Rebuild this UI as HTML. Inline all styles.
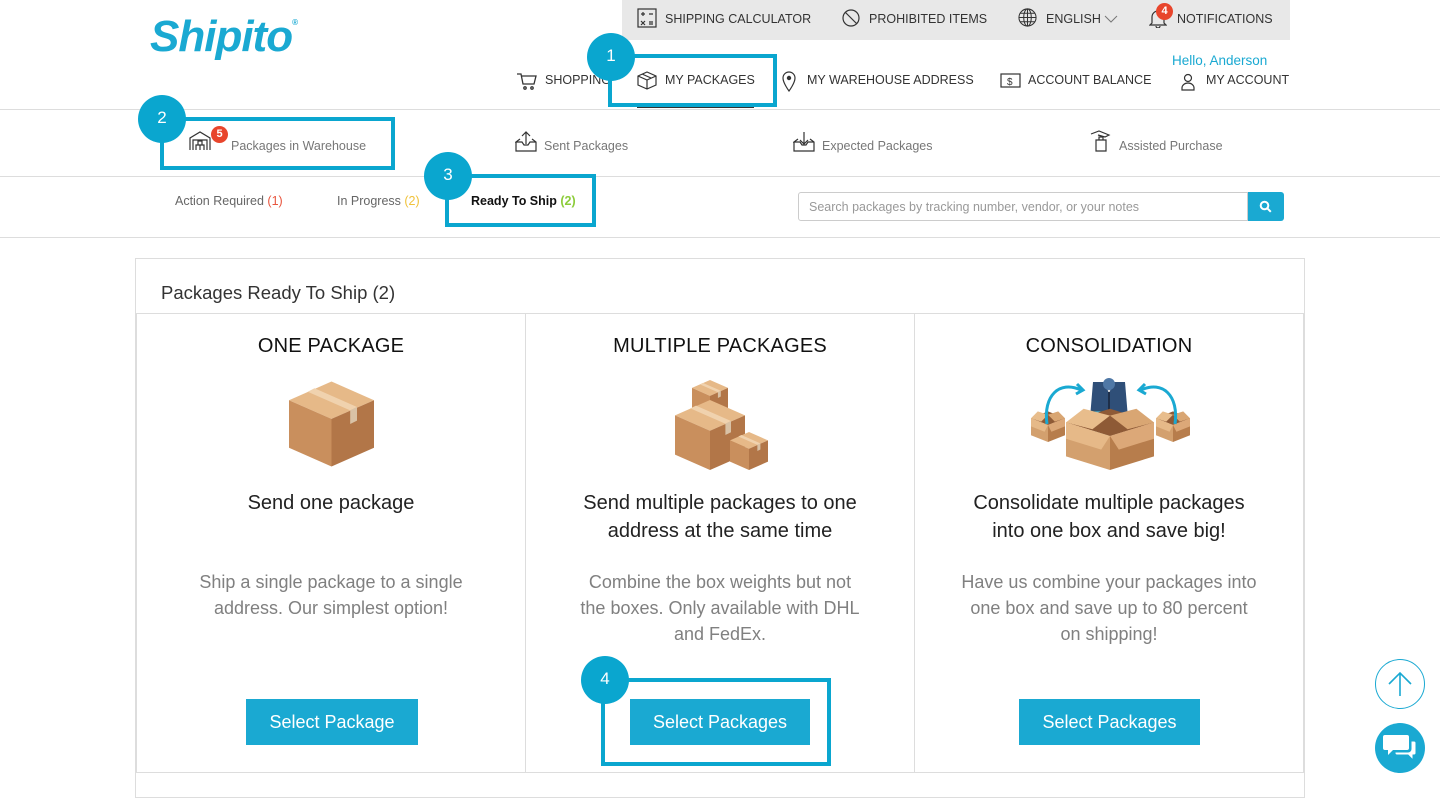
<!DOCTYPE html>
<html><head><meta charset="utf-8"><style>
*{box-sizing:border-box;margin:0;padding:0}
body{width:1440px;height:789px;overflow:hidden;background:#fff;font-family:"Liberation Sans",sans-serif;color:#222;position:relative}
.a{position:absolute}
.top{left:622px;top:0;width:668px;height:40px;background:#e8e8e8}
.tl{font-size:12.5px;color:#333;top:12px;white-space:nowrap}
.nav{font-size:12.5px;color:#333;top:73px;white-space:nowrap}
.hr{left:0;width:1440px;height:1px;background:#ddd}
.tab{font-size:12.5px;color:#777;top:139px;white-space:nowrap}
.sub{font-size:12.5px;color:#666;top:194px;white-space:nowrap}
.circ{width:48px;height:48px;border-radius:50%;background:#0aa6cf;color:#fff;font-size:17px;text-align:center;line-height:46px;z-index:5}
.hl{border:4px solid #0aa6cf;z-index:4}
.col{top:313px;width:390px;height:460px;border:1px solid #ddd;text-align:center}
.col h3{font-weight:normal;font-size:20px;margin-top:21px;color:#111;letter-spacing:.2px}
.t1{position:absolute;top:175px;left:0;width:100%;font-size:20px;line-height:28px;color:#222}
.t2{position:absolute;top:255px;left:0;width:100%;font-size:18px;line-height:26px;color:#808080}
.btn{position:absolute;top:385px;background:#1aa9d2;color:#fff;font-size:18px;height:46px;line-height:46px;text-align:center;white-space:nowrap}
.badge{width:17px;height:17px;border-radius:50%;background:#e8452c;color:#fff;font-size:11px;font-weight:bold;text-align:center;line-height:17px}
</style></head><body>
<svg width="0" height="0" style="position:absolute"><defs>
<symbol id="box" viewBox="0 0 100 100">
<polygon points="50,0 100,22 50,44 0,22" fill="#e6b988"/>
<polygon points="0,22 50,44 50,100 0,78" fill="#c98f5d"/>
<polygon points="100,22 50,44 50,100 100,78" fill="#b27648"/>
<polygon points="22,12 72,34 80,30 30,8" fill="#f0d2ae"/>
<polygon points="72,34 80,30 80,46 72,50" fill="#d9c2a6"/>
</symbol>
<symbol id="obox" viewBox="0 0 100 100">
<polygon points="50,10 100,30 50,50 0,30" fill="#8e5a36"/>
<polygon points="0,30 50,50 50,100 0,80" fill="#d3a06e"/>
<polygon points="100,30 50,50 50,100 100,80" fill="#b77d4c"/>
<polygon points="0,30 -10,50 40,70 50,50" fill="#e6b988"/>
<polygon points="100,30 110,50 60,70 50,50" fill="#dca878"/>
<polygon points="0,30 20,10 50,20 30,40" fill="#e8bd8c"/>
<polygon points="100,30 80,10 50,20 70,40" fill="#d9a673"/>
</symbol>
</defs></svg>

<div class="a" style="left:150px;top:12px;font-size:44px;font-weight:bold;font-style:italic;color:#1aa9d2;letter-spacing:-1px">Shipito<span style="font-size:8px;vertical-align:top;font-style:normal;position:relative;top:6px">®</span></div>

<div class="a top"></div>
<svg class="a" style="left:637px;top:8px" width="20" height="20" viewBox="0 0 20 20" fill="none" stroke="#333" stroke-width="1.2"><rect x="1" y="1" width="18" height="18"/><path d="M4 6h4M6 4v4M12 6h4M4 13l4 4M8 13l-4 4M12 14h4M12 16h4"/></svg>
<div class="a tl" style="left:665px">SHIPPING CALCULATOR</div>
<svg class="a" style="left:842px;top:9px" width="18" height="18" viewBox="0 0 18 18" fill="none" stroke="#333" stroke-width="1.2"><circle cx="9" cy="9" r="8"/><path d="M3.5 3.5l11 11"/></svg>
<div class="a tl" style="left:869px">PROHIBITED ITEMS</div>
<svg class="a" style="left:1018px;top:8px" width="19" height="19" viewBox="0 0 20 20" fill="none" stroke="#333" stroke-width="1.1"><circle cx="10" cy="10" r="9"/><ellipse cx="10" cy="10" rx="4" ry="9"/><path d="M1 10h18M2.5 5.5h15M2.5 14.5h15M10 1v18"/></svg>
<div class="a tl" style="left:1046px">ENGLISH</div>
<svg class="a" style="left:1104px;top:15px" width="14" height="8" fill="none" stroke="#777" stroke-width="1"><path d="M1 1l6 6 6-6"/></svg>
<svg class="a" style="left:1149px;top:8px" width="18" height="20" viewBox="0 0 18 20" fill="none" stroke="#333" stroke-width="1.2"><path d="M3 15V9a6 6 0 0112 0v6l2 2H1z M7 18a2 2 0 004 0"/></svg>
<div class="a badge" style="left:1156px;top:3px">4</div>
<div class="a tl" style="left:1177px">NOTIFICATIONS</div>

<div class="a" style="left:1172px;top:53px;font-size:13.5px;color:#1aa9d2">Hello, Anderson</div>
<svg class="a" style="left:516px;top:71px" width="22" height="20" viewBox="0 0 22 20" fill="none" stroke="#333" stroke-width="1.3"><path d="M1 3h4l2 10h11l2-8H6"/><circle cx="9" cy="17" r="1.2"/><circle cx="16" cy="17" r="1.2"/></svg>
<div class="a nav" style="left:545px">SHOPPING</div>
<div class="a" style="left:637px;top:105px;width:117px;height:3px;background:#333"></div>
<div class="a hl" style="left:608px;top:54px;width:169px;height:53px"></div>
<div class="a circ" style="left:587px;top:33px">1</div>
<svg class="a" style="left:637px;top:71px" width="20" height="19" viewBox="0 0 20 19" fill="none" stroke="#333" stroke-width="1.2"><path d="M1 5l9-4 9 4v9l-9 4-9-4z M1 5l9 4 9-4 M10 9v9 M5 3l9 4"/></svg>
<div class="a nav" style="left:665px">MY PACKAGES</div>
<svg class="a" style="left:781px;top:70px" width="16" height="22" viewBox="0 0 16 22" fill="none" stroke="#333" stroke-width="1.2"><path d="M8 21S2 13 2 8a6 6 0 0112 0c0 5-6 13-6 13z"/><circle cx="8" cy="8" r="1.6" fill="#333"/></svg>
<div class="a nav" style="left:807px">MY WAREHOUSE ADDRESS</div>
<svg class="a" style="left:1000px;top:73px" width="21" height="15" viewBox="0 0 21 15" fill="none" stroke="#333" stroke-width="1.2"><rect x="1" y="1" width="19" height="13"/><text x="7" y="12" font-size="10" fill="#333" stroke="none" font-family="Liberation Sans">$</text></svg>
<div class="a nav" style="left:1028px">ACCOUNT BALANCE</div>
<svg class="a" style="left:1181px;top:73px" width="14" height="18" viewBox="0 0 14 18" fill="none" stroke="#333" stroke-width="1.2"><circle cx="7" cy="5" r="3.5"/><path d="M1 17v-2a6 5 0 0112 0v2z"/></svg>
<div class="a nav" style="left:1206px">MY ACCOUNT</div>

<div class="a hr" style="top:109px"></div>
<div class="a hr" style="top:176px"></div>
<div class="a hr" style="top:237px"></div>

<div class="a hl" style="left:160px;top:117px;width:235px;height:53px"></div>
<div class="a circ" style="left:138px;top:95px">2</div>
<svg class="a" style="left:189px;top:131px" width="22" height="20" viewBox="0 0 22 20" fill="none" stroke="#333" stroke-width="1.2"><path d="M1 19V7l10-6 10 6v12 M4 19V9h14v10 M7 19v-5h4v5 M11 19v-5h4v5 M9 14v-4h4v4"/></svg>
<div class="a badge" style="left:211px;top:126px;z-index:6">5</div>
<div class="a tab" style="left:231px">Packages in Warehouse</div>
<svg class="a" style="left:515px;top:130px" width="22" height="22" viewBox="0 0 22 22" fill="none" stroke="#333" stroke-width="1.2"><path d="M1 12v9h20v-9l-4-3 M5 9l-4 3h6l2 3h4l2-3h6 M11 14V2 M7 6l4-4 4 4"/></svg>
<div class="a tab" style="left:544px">Sent Packages</div>
<svg class="a" style="left:793px;top:130px" width="22" height="22" viewBox="0 0 22 22" fill="none" stroke="#333" stroke-width="1.2"><path d="M1 12v9h20v-9l-4-3 M5 9l-4 3h6l2 3h4l2-3h6 M11 2v12 M7 10l4 4 4-4"/></svg>
<div class="a tab" style="left:822px">Expected Packages</div>
<svg class="a" style="left:1090px;top:130px" width="22" height="22" viewBox="0 0 22 22" fill="none" stroke="#333" stroke-width="1.2"><path d="M1 4l8-3 10 4-4 2-7-2 M6 10h10v11H6z M9 10V7h4v3"/></svg>
<div class="a tab" style="left:1119px">Assisted Purchase</div>

<div class="a sub" style="left:175px">Action Required <span style="color:#e8553e">(1)</span></div>
<div class="a sub" style="left:337px">In Progress <span style="color:#f0c23a">(2)</span></div>
<div class="a hl" style="left:445px;top:174px;width:151px;height:53px"></div>
<div class="a circ" style="left:424px;top:152px">3</div>
<div class="a sub" style="left:471px;color:#111;font-weight:bold">Ready To Ship <span style="color:#8ccc3a">(2)</span></div>

<div class="a" style="left:798px;top:192px;width:450px;height:29px;border:1px solid #ccc;border-radius:3px 0 0 3px;font-size:12.5px;color:#999;padding:7px 10px;white-space:nowrap">Search packages by tracking number, vendor, or your notes</div>
<div class="a" style="left:1248px;top:192px;width:36px;height:29px;background:#1aa9d2;border-radius:0 3px 3px 0"></div>
<svg class="a" style="left:1259px;top:200px" width="13" height="13" viewBox="0 0 13 13" fill="none" stroke="#fff" stroke-width="2"><circle cx="5.5" cy="5.5" r="3.8"/><path d="M8.3 8.3l3.5 3.5"/></svg>

<div class="a" style="left:135px;top:258px;width:1170px;height:540px;border:1px solid #ddd"></div>
<div class="a" style="left:161px;top:282px;font-size:18.5px;color:#333">Packages Ready To Ship (2)</div>

<div class="a col" style="left:136px">
<h3>ONE PACKAGE</h3>
<svg style="position:absolute;left:152px;top:66px" width="85" height="88" viewBox="0 0 100 100"><use href="#box"/></svg>
<div class="t1">Send one package</div>
<div class="t2">Ship a single package to a single<br>address. Our simplest option!</div>
<div class="btn" style="left:109px;width:172px">Select Package</div>
</div>
<div class="a col" style="left:525px">
<h3>MULTIPLE PACKAGES</h3>
<svg style="position:absolute;left:166px;top:66px" width="36" height="36" viewBox="0 0 100 100"><use href="#box"/></svg>
<svg style="position:absolute;left:148px;top:86px" width="72" height="70" viewBox="0 0 100 100"><use href="#box"/></svg>
<svg style="position:absolute;left:204px;top:118px" width="38" height="38" viewBox="0 0 100 100"><use href="#box"/></svg>
<div class="t1">Send multiple packages to one<br>address at the same time</div>
<div class="t2">Combine the box weights but not<br>the boxes. Only available with DHL<br>and FedEx.</div>
<div class="btn" style="left:104px;width:180px">Select Packages</div>
</div>
<div class="a col" style="left:914px">
<h3>CONSOLIDATION</h3>
<svg style="position:absolute;left:172px;top:64px" width="44" height="52" viewBox="0 0 44 52"><path d="M6 4h32l4 48H2z" fill="#2f4f78"/><path d="M18 4l4 12 4-12" fill="#ddd"/><path d="M21 14h2v38h-2z" fill="#1d2f4a"/><circle cx="22" cy="6" r="6" fill="#4f78a6"/></svg>
<svg style="position:absolute;left:174px;top:96px" width="22" height="28" viewBox="0 0 22 28"><rect x="1" y="1" width="20" height="26" rx="2" fill="#5ac5ea" stroke="#356" stroke-width="1"/></svg>
<svg style="position:absolute;left:151px;top:88px" width="88" height="68" viewBox="0 0 100 100" preserveAspectRatio="none"><use href="#obox"/></svg>
<svg style="position:absolute;left:116px;top:94px" width="34" height="34" viewBox="0 0 100 100"><use href="#obox"/></svg>
<svg style="position:absolute;left:241px;top:94px" width="34" height="34" viewBox="0 0 100 100"><use href="#obox"/></svg>
<svg style="position:absolute;left:126px;top:62px;overflow:visible" width="140" height="50" fill="none" stroke="#1aa9d2" stroke-width="3"><path d="M6 48C2 20 18 4 40 14"/><path d="M36 8l6 6-7 4" /><path d="M134 48C138 20 122 4 100 14"/><path d="M104 8l-6 6 7 4"/></svg>
<div class="t1">Consolidate multiple packages<br>into one box and save big!</div>
<div class="t2">Have us combine your packages into<br>one box and save up to 80 percent<br>on shipping!</div>
<div class="btn" style="left:104px;width:181px">Select Packages</div>
</div>

<div class="a hl" style="left:601px;top:678px;width:230px;height:88px"></div>
<div class="a circ" style="left:581px;top:656px">4</div>

<div class="a" style="left:1375px;top:659px;width:50px;height:50px;border-radius:50%;border:1.5px solid #1aa9d2"></div>
<svg class="a" style="left:1387px;top:670px" width="26" height="28" fill="none" stroke="#1aa9d2" stroke-width="1.6"><path d="M13 26V3M2 14L13 3l11 11"/></svg>
<div class="a" style="left:1375px;top:723px;width:50px;height:50px;border-radius:50%;background:#1aa9d2"></div>
<svg class="a" style="left:1383px;top:733px" width="34" height="30" viewBox="0 0 34 30" fill="#fff"><path d="M2 2h22a2 2 0 012 2v11a2 2 0 01-2 2H10l-5 5v-5H2a2 2 0 01-2-2V4a2 2 0 012-2z"/><path d="M28 8h3a2 2 0 012 2v10a2 2 0 01-2 2h-1v5l-5-5H14a2 2 0 01-2-2v-1h13a3 3 0 003-3z" stroke="#1aa9d2" stroke-width="1"/></svg>
</body></html>
